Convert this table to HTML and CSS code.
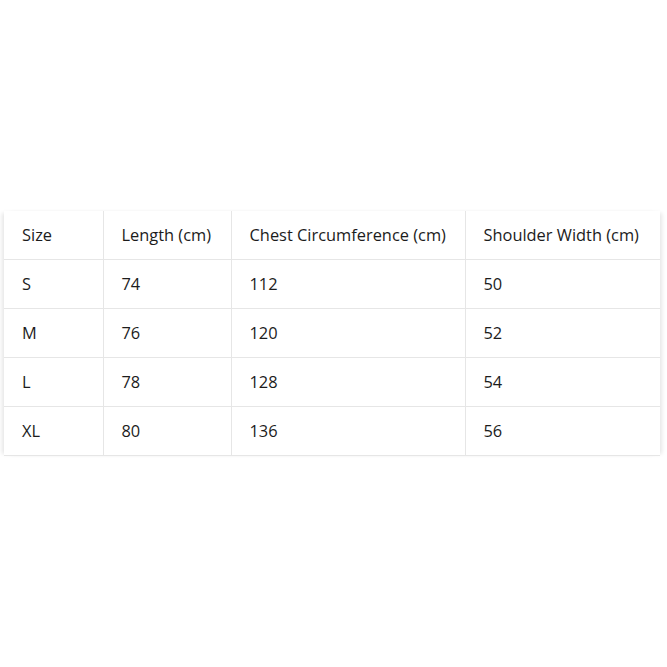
FILE: index.html
```html
<!DOCTYPE html>
<html>
<head>
<meta charset="utf-8">
<link rel="stylesheet" href="styles.css">
</head>
<body>
<div class="page">
  <div class="wrap">
    <table class="size-table">
      <colgroup>
        <col class="c1"><col class="c2"><col class="c3"><col class="c4">
      </colgroup>
      <thead>
        <tr><th>Size</th><th>Length (cm)</th><th>Chest Circumference (cm)</th><th>Shoulder Width (cm)</th></tr>
      </thead>
      <tbody>
        <tr><td>S</td><td>74</td><td>112</td><td>50</td></tr>
        <tr><td>M</td><td>76</td><td>120</td><td>52</td></tr>
        <tr><td>L</td><td>78</td><td>128</td><td>54</td></tr>
        <tr><td>XL</td><td>80</td><td>136</td><td>56</td></tr>
      </tbody>
    </table>
  </div>
</div>
</body>
</html>
```
FILE: styles.css
```css
html, body {
  margin: 0;
  padding: 0;
  background: #fff;
}
.page {
  height: 667px;
  display: flex;
  align-items: center;
  padding-left: 4px;
}
.wrap {
  width: 656px;
  box-shadow: -4px 0 4px -2px rgba(0,0,0,0.10), 4px 0 4px -2px rgba(0,0,0,0.10);
  background: #fff;
}
.size-table {
  width: 656px;
  border-collapse: collapse;
  table-layout: fixed;
  font-family: "Open Sans", "Noto Sans", sans-serif;
  font-size: 16.4px;
  color: #1c1c1c;
}
.c1 { width: 99px; }
.c2 { width: 128px; }
.c3 { width: 234px; }
.c4 { width: 195px; }
.size-table th,
.size-table td {
  height: 47px;
  padding: 0 0 1px 18px;
  box-sizing: content-box;
  text-align: left;
  font-weight: normal;
  border-bottom: 1px solid #e6e6e6;
  border-left: 1px solid #e6e6e6;
  white-space: nowrap;
}
.size-table th:first-child,
.size-table td:first-child {
  border-left: none;
}
```
